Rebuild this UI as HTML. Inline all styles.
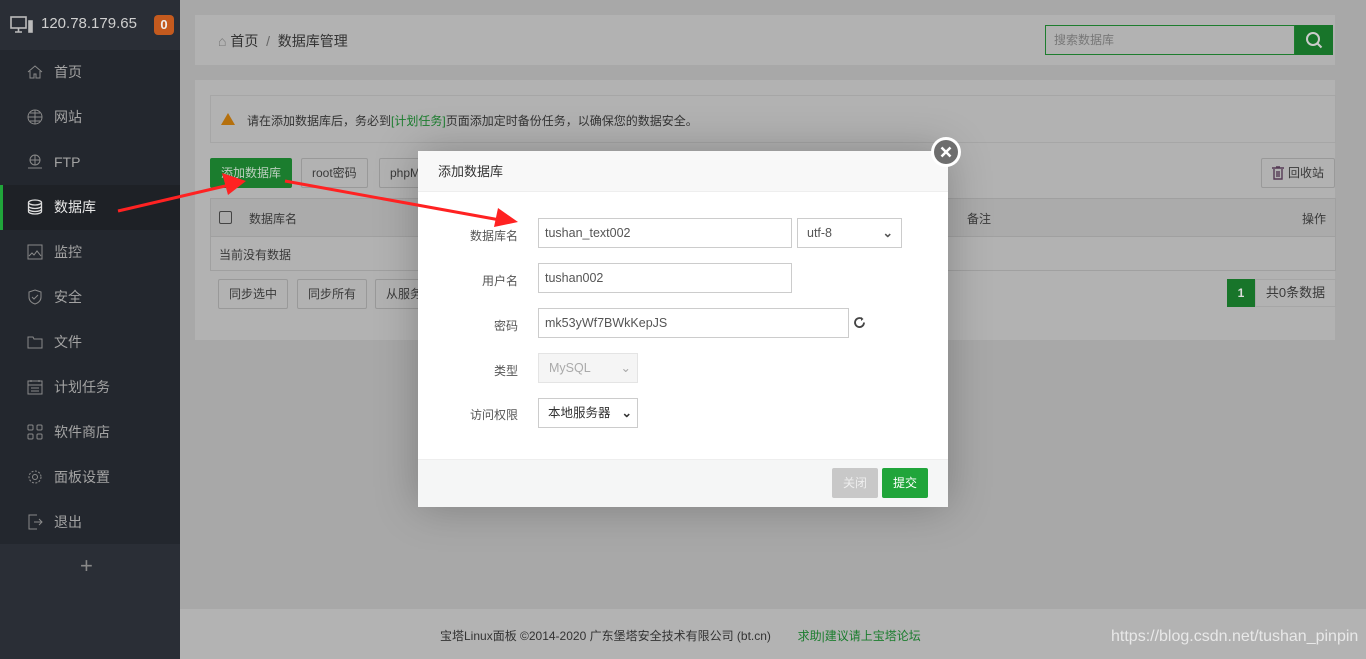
<!DOCTYPE html>
<html><head><meta charset="utf-8"><style>
*{margin:0;padding:0;box-sizing:border-box}
body{width:1366px;height:659px;overflow:hidden;position:relative;background:#a8a8a8;font-family:"Liberation Sans","Noto Sans CJK SC",sans-serif;font-size:12px;color:#3a3a3a}
.a{position:absolute}
.side{left:0;top:0;width:180px;height:659px;background:#2a2e36}
.menu{left:0;top:50px;width:180px;height:494px;background:#23272e}
.mi{position:absolute;left:0;width:180px;height:45px;line-height:45px;padding-left:54px;color:#a3a3a3;font-size:14px}
.mi svg{position:absolute;left:27px;top:14px}
.btn{position:absolute;height:30px;line-height:28px;border:1px solid #999;border-radius:2px;padding:0 10px;color:#3a3a3a;background:#b2b2b2}
.inp{position:absolute;height:30px;border:1px solid #ccc;line-height:28px;padding-left:6px;font-size:12.5px;color:#555;background:#fff}
.lab{position:absolute;width:100px;text-align:right;color:#555;left:0}
</style></head><body>
<div class="a side"></div>
<div class="a" style="left:10px;top:16px"><svg width="24" height="18" viewBox="0 0 24 18" fill="none" stroke="#bbb" stroke-width="1.6"><rect x="1" y="1" width="15" height="11"/><path d="M5 16h7M8.5 12v4"/><rect x="19" y="5" width="3" height="11" fill="#bbb"/></svg></div>
<div class="a" style="left:41px;top:15px;color:#cfcfcf;font-size:15px">120.78.179.65</div>
<div class="a" style="left:154px;top:15px;width:20px;height:20px;border-radius:4px;background:#c45a1e;color:#eee;font-weight:bold;text-align:center;line-height:20px;font-size:13px">0</div>
<div class="a menu"></div>
<div class="mi" style="top:50px"><svg width="16" height="16" viewBox="0 0 16 16" fill="none" stroke="#8a8a8a"><path d="M1 8L8 2l7 6M3 7v7h4v-4h2v4h4V7"/></svg>首页</div>
<div class="mi" style="top:95px"><svg width="16" height="16" viewBox="0 0 16 16" fill="none" stroke="#8a8a8a"><circle cx="8" cy="8" r="7"/><path d="M1 8h14M8 1v14M3 4h10M3 12h10"/></svg>网站</div>
<div class="mi" style="top:140px"><svg width="16" height="16" viewBox="0 0 16 16" fill="none" stroke="#8a8a8a"><circle cx="8" cy="6" r="5"/><path d="M3 6h10M8 1v10M1 14h14"/></svg>FTP</div>
<div class="mi" style="top:185px;background:#1e2126;color:#e8e8e8"><div class="a" style="left:0;top:0;width:3px;height:45px;background:#20a53a"></div><svg width="16" height="16" viewBox="0 0 16 16" fill="none" stroke="#ddd" stroke-width="1.3"><ellipse cx="8" cy="3.5" rx="6.5" ry="2.5"/><path d="M1.5 3.5v9c0 1.4 2.9 2.5 6.5 2.5s6.5-1.1 6.5-2.5v-9M1.5 7c0 1.4 2.9 2.5 6.5 2.5s6.5-1.1 6.5-2.5M1.5 10c0 1.4 2.9 2.5 6.5 2.5s6.5-1.1 6.5-2.5"/></svg>数据库</div>
<div class="mi" style="top:230px"><svg width="16" height="16" viewBox="0 0 16 16" fill="none" stroke="#8a8a8a"><rect x="1" y="1" width="14" height="14"/><path d="M2 12l3-3 2 2 3-4 4 5"/></svg>监控</div>
<div class="mi" style="top:275px"><svg width="16" height="16" viewBox="0 0 16 16" fill="none" stroke="#8a8a8a"><path d="M8 1l6 2v5c0 4-3 6-6 7-3-1-6-3-6-7V3z"/><path d="M5 8l2 2 4-4"/></svg>安全</div>
<div class="mi" style="top:320px"><svg width="16" height="16" viewBox="0 0 16 16" fill="none" stroke="#8a8a8a"><path d="M1 3h5l1 2h8v9H1z"/></svg>文件</div>
<div class="mi" style="top:365px"><svg width="16" height="16" viewBox="0 0 16 16" fill="none" stroke="#8a8a8a"><rect x="1" y="2" width="14" height="13"/><path d="M1 6h14M4 1v2M12 1v2M4 9h8M4 12h8"/></svg>计划任务</div>
<div class="mi" style="top:410px"><svg width="16" height="16" viewBox="0 0 16 16" fill="none" stroke="#8a8a8a"><rect x="1" y="1" width="5" height="5" rx="1"/><rect x="10" y="1" width="5" height="5" rx="1"/><rect x="1" y="10" width="5" height="5" rx="1"/><rect x="10" y="10" width="5" height="5" rx="1"/></svg>软件商店</div>
<div class="mi" style="top:455px"><svg width="16" height="16" viewBox="0 0 16 16" fill="none" stroke="#8a8a8a"><circle cx="8" cy="8" r="2.5"/><circle cx="8" cy="8" r="6" stroke-dasharray="2 1.5"/></svg>面板设置</div>
<div class="mi" style="top:500px"><svg width="16" height="16" viewBox="0 0 16 16" fill="none" stroke="#8a8a8a"><path d="M10 1H2v14h8M7 8h8M12 5l3 3-3 3"/></svg>退出</div>
<div class="a" style="left:80px;top:553px;color:#888;font-size:22px">+</div>

<div class="a" style="left:195px;top:15px;width:1140px;height:50px;background:#b2b2b2"></div>
<div class="a" style="left:218px;top:31px;font-size:14px;color:#333"><span style="color:#777">⌂</span> 首页 &nbsp;<span style="color:#666">/</span>&nbsp; 数据库管理</div>
<div class="a" style="left:1045px;top:25px;width:250px;height:30px;border:1px solid #1d7d2e;padding-left:8px;line-height:28px;color:#777">搜索数据库</div>
<div class="a" style="left:1295px;top:25px;width:38px;height:30px;background:#18752a"><svg width="38" height="30" viewBox="0 0 38 30" fill="none" stroke="#ccc" stroke-width="2"><circle cx="18" cy="14" r="6"/><path d="M22.5 18.5l4 4"/></svg></div>

<div class="a" style="left:195px;top:80px;width:1140px;height:260px;background:#b2b2b2"></div>
<div class="a" style="left:210px;top:95px;width:1126px;height:48px;border:1px solid #a6a6a6"></div>
<div class="a" style="left:221px;top:113px;width:0;height:0;border-left:7px solid transparent;border-right:7px solid transparent;border-bottom:12px solid #b5700d"></div>
<div class="a" style="left:247px;top:112px;color:#333">请在添加数据库后，务必到<span style="color:#1b7d2e">[计划任务]</span>页面添加定时备份任务，以确保您的数据安全。</div>
<div class="btn" style="left:210px;top:158px;width:82px;background:#1b7d2e;border-color:#1b7d2e;color:#bcd0bf">添加数据库</div>
<div class="btn" style="left:301px;top:158px">root密码</div>
<div class="btn" style="left:379px;top:158px;width:60px">phpM</div>
<div class="btn" style="left:1261px;top:158px;width:74px;padding-left:26px">回收站</div>
<svg class="a" style="left:1272px;top:166px" width="12" height="14" viewBox="0 0 12 14" fill="none" stroke="#553a55" stroke-width="1.4"><path d="M0 2h12M4 1h4M2 3v10h8V3M5 5v6M7 5v6"/></svg>
<div class="a" style="left:210px;top:198px;width:1126px;height:39px;border:1px solid #a0a0a0;background:#ababab"></div>
<div class="a" style="left:210px;top:236px;width:1126px;height:35px;border:1px solid #a0a0a0;border-top:none"></div>
<div class="a" style="left:219px;top:211px;width:13px;height:13px;border:1px solid #444;border-radius:2px"></div>
<div class="a" style="left:249px;top:210px">数据库名</div>
<div class="a" style="left:967px;top:210px">备注</div>
<div class="a" style="left:1302px;top:210px">操作</div>
<div class="a" style="left:219px;top:246px">当前没有数据</div>
<div class="btn" style="left:218px;top:279px">同步选中</div>
<div class="btn" style="left:297px;top:279px">同步所有</div>
<div class="btn" style="left:375px;top:279px;width:60px">从服务</div>
<div class="a" style="left:1227px;top:279px;width:28px;height:28px;background:#18752a;color:#ddd;text-align:center;line-height:28px;font-weight:bold">1</div>
<div class="a" style="left:1255px;top:279px;width:81px;height:28px;border:1px solid #a6a6a6;line-height:26px;text-align:center;font-size:13px">共0条数据</div>

<div class="a" style="left:180px;top:609px;width:1186px;height:50px;background:#b3b3b3"></div>
<div class="a" style="left:440px;top:627px;color:#333">宝塔Linux面板 ©2014-2020 广东堡塔安全技术有限公司 (bt.cn)&nbsp;&nbsp;&nbsp;&nbsp;&nbsp;&nbsp;&nbsp; <span style="color:#1b7d2e">求助|建议请上宝塔论坛</span></div>
<div class="a" style="left:1111px;top:628px;color:#e8e8e8;font-size:16px">https://blog.csdn.net/tushan_pinpin</div>

<div class="a" style="left:418px;top:151px;width:530px;height:356px;background:#fff;box-shadow:0 0 40px rgba(0,0,0,.25)"></div>
<div class="a" style="left:418px;top:151px;width:530px;height:41px;background:#f8f8f8;border-bottom:1px solid #eee;padding-left:20px;line-height:41px;font-size:13px;color:#333">添加数据库</div>
<div class="a" style="left:418px;top:459px;width:530px;height:48px;background:#f5f6f6;border-top:1px solid #eee"></div>
<div class="a" style="left:931px;top:137px;width:30px;height:30px;border-radius:50%;background:#fff"></div>
<div class="a" style="left:934px;top:140px;width:24px;height:24px;border-radius:50%;background:#6e6e6e"><svg width="24" height="24" viewBox="0 0 24 24" stroke="#fff" stroke-width="2.5"><path d="M7.5 7.5l9 9M16.5 7.5l-9 9"/></svg></div>
<div class="lab" style="left:418px;top:227px">数据库名</div>
<div class="inp" style="left:538px;top:218px;width:254px">tushan_text002</div>
<div class="inp" style="left:797px;top:218px;width:105px;padding-left:9px">utf-8<span style="position:absolute;right:8px;font-weight:bold">⌄</span></div>
<div class="lab" style="left:418px;top:272px">用户名</div>
<div class="inp" style="left:538px;top:263px;width:254px">tushan002</div>
<div class="lab" style="left:418px;top:317px">密码</div>
<div class="inp" style="left:538px;top:308px;width:311px">mk53yWf7BWkKepJS</div>
<svg class="a" style="left:853px;top:316px" width="13" height="13" viewBox="0 0 13 13" fill="none" stroke="#444" stroke-width="1.8"><path d="M11 6.5A4.5 4.5 0 1 1 9 2.8"/><path d="M8 1l2.5 2L8 5" fill="#444" stroke="none"/></svg>
<div class="lab" style="left:418px;top:362px">类型</div>
<div class="inp" style="left:538px;top:353px;width:100px;background:#f5f5f5;color:#aaa;border-color:#e4e4e4;padding-left:10px">MySQL<span style="position:absolute;right:6px">⌄</span></div>
<div class="lab" style="left:418px;top:406px">访问权限</div>
<div class="inp" style="left:538px;top:398px;width:100px;padding-left:9px;color:#333">本地服务器<span style="position:absolute;right:5px;font-weight:bold">⌄</span></div>
<div class="a" style="left:832px;top:468px;width:46px;height:30px;background:#c8c8c8;border-radius:2px;color:#eee;text-align:center;line-height:30px">关闭</div>
<div class="a" style="left:882px;top:468px;width:46px;height:30px;background:#20a53a;border-radius:2px;color:#fff;text-align:center;line-height:30px">提交</div>

<svg class="a" style="left:0;top:0" width="1366" height="659">
<path d="M118 211L238 183" stroke="#f22" stroke-width="3"/><path d="M222 173l24 8-18 14z" fill="#f22"/>
<path d="M285 181L500 220" stroke="#f22" stroke-width="3"/><path d="M498 208l20 14-24 5z" fill="#f22"/>
</svg>
</body></html>
